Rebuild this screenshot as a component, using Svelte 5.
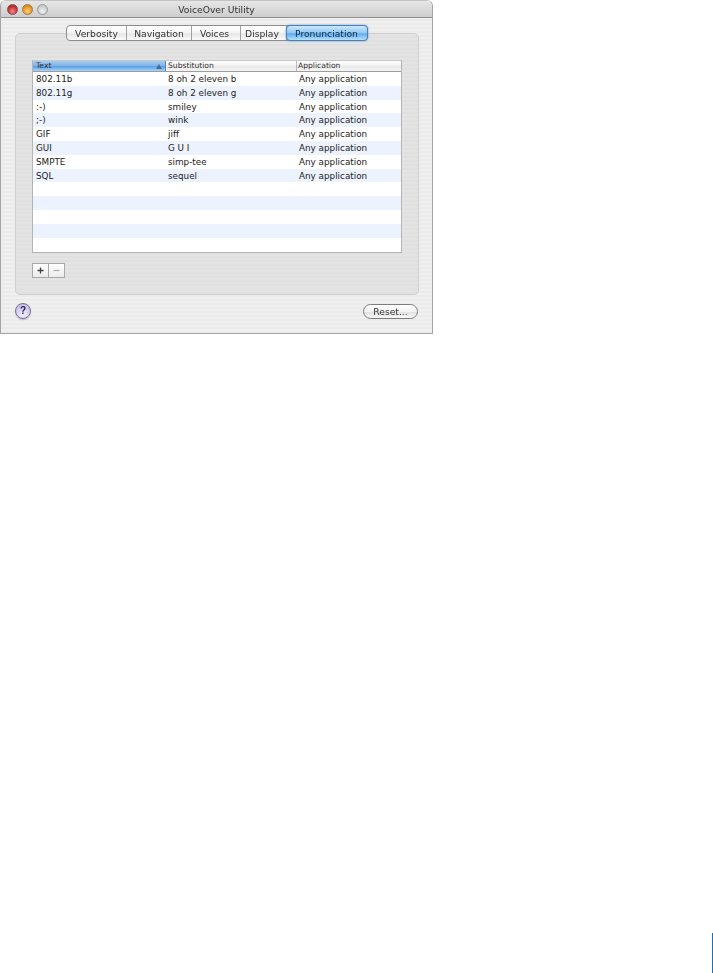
<script>
  const rows = [
    ['802.11b', '8 oh 2 eleven b', 'Any application'],
    ['802.11g', '8 oh 2 eleven g', 'Any application'],
    [':-)', 'smiley', 'Any application'],
    [';-)', 'wink', 'Any application'],
    ['GIF', 'jiff', 'Any application'],
    ['GUI', 'G U I', 'Any application'],
    ['SMPTE', 'simp-tee', 'Any application'],
    ['SQL', 'sequel', 'Any application'],
    ['', '', ''], ['', '', ''], ['', '', ''], ['', '', ''], ['', '', '']
  ];
  const tabs = ['Verbosity', 'Navigation', 'Voices', 'Display', 'Pronunciation'];
</script>

<div class="page">
  <div class="window">
    <div class="titlebar">
      <div class="lights">
        <span class="light red"></span>
        <span class="light amber"></span>
        <span class="light grey"></span>
      </div>
      <div class="title">VoiceOver Utility</div>
    </div>
    <div class="content">
      <div class="tabs">
        {#each tabs as t, i}
          <div class="tab t{i}" class:active={i === 4}>{t}</div>
        {/each}
      </div>
      <div class="panel">
        <div class="table">
          <div class="thead">
            <div class="th c1 sorted"><span>Text</span><i class="arrow"></i></div>
            <div class="th c2">Substitution</div>
            <div class="th c3">Application</div>
          </div>
          {#each rows as r, i}
            <div class="row" class:alt={i % 2 === 1}>
              <div class="td c1">{r[0]}</div>
              <div class="td c2">{r[1]}</div>
              <div class="td c3">{r[2]}</div>
            </div>
          {/each}
        </div>
        <div class="addrem">
          <div class="ar">
            <svg width="9" height="9" viewBox="0 0 9 9"><path d="M4.5 1.5v6M1.5 4.5h6" stroke="#444" stroke-width="1.3"/></svg>
          </div>
          <div class="ar">
            <svg width="9" height="9" viewBox="0 0 9 9"><path d="M1.5 4.5h6" stroke="#aaa" stroke-width="1.2"/></svg>
          </div>
        </div>
      </div>
      <div class="footer">
        <div class="help">?</div>
        <div class="reset">Reset...</div>
      </div>
    </div>
  </div>
  <div class="pagebar"></div>
</div>

<style>
  :global(body) { margin: 0; background: #fff; }
  .page {
    position: relative;
    width: 713px;
    height: 973px;
    overflow: hidden;
    background: #fff;
    font-family: "Lucida Grande", "DejaVu Sans", sans-serif;
    color: #222;
  }
  .window {
    width: 433px;
    height: 334px;
    box-sizing: border-box;
    border: 1px solid #a4a4a4;
    border-top-color: #c4c4c4;
    border-radius: 6px 6px 0 0;
    display: flex;
    flex-direction: column;
    background: repeating-linear-gradient(#f0f0f0 0 2px, #ebebeb 2px 4px);
    filter: blur(0.3px);
  }
  .titlebar {
    height: 16px;
    flex: none;
    display: flex;
    align-items: center;
    position: relative;
    background: linear-gradient(#e6e6e6, #cdcdcd);
    border-bottom: 1px solid #8f8f8f;
    border-radius: 5px 5px 0 0;
  }
  .lights { display: flex; gap: 4px; margin-left: 5.5px; }
  .light { width: 11px; height: 11px; border-radius: 50%; box-sizing: border-box; }
  .red { background: radial-gradient(circle at 50% 70%, #f58a8a, #b9232a 70%); border: 1px solid #8c4a4a; }
  .amber { background: radial-gradient(circle at 50% 70%, #fbd27a, #df8a18 70%); border: 1px solid #a07a3c; }
  .grey { background: radial-gradient(circle at 50% 70%, #f2f2f2, #c8c8c8 70%); border: 1px solid #9a9a9a; }
  .title {
    position: absolute;
    left: 0; right: 0; top: 0;
    line-height: 17px;
    text-align: center;
    font-size: 9.2px;
    color: #333;
  }
  .content {
    flex: 1;
    display: flex;
    flex-direction: column;
    padding: 7px 14px 0;
    min-height: 0;
  }
  .tabs {
    display: flex;
    margin-left: 51px;
    height: 16px;
    margin-bottom: -8px;
    position: relative;
    z-index: 1;
    width: 302px;
    box-sizing: border-box;
    border: 1px solid #8d8d8d;
    border-radius: 4px;
    background: linear-gradient(#fff, #f4f4f4 50%, #e6e6e6 55%, #fafafa);
    font-size: 9.2px;
    line-height: 15px;
    color: #333;
  }
  .tab { text-align: center; border-right: 1px solid #a0a0a0; box-sizing: border-box; }
  .t0 { width: 60px; }
  .t1 { width: 65px; }
  .t2 { width: 49px; padding-right: 3px; }
  .t3 { width: 46px; padding-right: 3px; }
  .t4 { flex: 1; border-right: 0; }
  .active {
    margin: -1px -1px -1px -1px;
    height: 16px;
    padding-right: 1px;
    border-radius: 4px;
    background: linear-gradient(#cfe8fb, #8fc8f4 50%, #5fabec 55%, #b4e2fc);
    border: 1px solid #4b7fb8;
    color: #13294a;
    line-height: 15px;
    box-shadow: 0 0 2px #4a90e0;
  }
  .panel {
    width: 404px;
    height: 262px;
    box-sizing: border-box;
    border: 1px solid #cfcfcf;
    border-radius: 5px;
    background: repeating-linear-gradient(#e4e4e4 0 2px, #e0e0e0 2px 4px);
    padding: 26px 16px 0;
    flex: none;
  }
  .table {
    width: 370px;
    height: 193px;
    box-sizing: border-box;
    border: 1px solid #b4b4b4;
    border-top: 0;
    background: #fff;
    overflow: hidden;
    font-size: 8.8px;
  }
  .thead {
    display: flex;
    height: 12px;
    box-sizing: border-box;
    border-bottom: 1px solid #9c9c9c;
    background: linear-gradient(#fff, #f0f0f0 50%, #e8e8e8 55%, #f6f6f6);
    border-top: 1px solid #c8c8c8;
    font-size: 7.6px;
    line-height: 10px;
    color: #333;
  }
  .c1 { width: 133px; flex: none; padding-left: 3px; box-sizing: border-box; }
  .c2 { width: 131px; flex: none; padding-left: 2px; box-sizing: border-box; }
  .c3 { flex: 1; padding-left: 2px; box-sizing: border-box; }
  .th { border-right: 1px solid #b8b8b8; }
  .th.c3 { border-right: 0; padding-left: 1px; }
  .sorted {
    display: flex;
    justify-content: space-between;
    align-items: center;
    padding-right: 3px;
    background: linear-gradient(#a6cdf2, #7db3ea 50%, #5f9fe2 55%, #a5d4f8);
    border-right: 1px solid #5a86b8;
  }
  .arrow {
    width: 0; height: 0;
    border-left: 3px solid transparent;
    border-right: 3px solid transparent;
    border-bottom: 5px solid #4a6a90;
  }
  .row {
    display: flex;
    height: 13.8px;
    line-height: 15.6px;
    color: #222;
  }
  .alt { background: #edf3fe; }
  .td { white-space: nowrap; }
  .addrem { display: flex; margin-top: 10px; width: 33px; }
  .ar {
    width: 17px;
    height: 15px;
    box-sizing: border-box;
    border: 1px solid #a8a8a8;
    background: linear-gradient(#fff, #ececec);
    display: flex;
    align-items: center;
    justify-content: center;
  }
  .ar + .ar { border-left: 0; width: 16px; }
  .footer {
    flex: 1;
    display: flex;
    justify-content: space-between;
    align-items: center;
    padding-bottom: 6px;
  }
  .help {
    width: 16px;
    height: 16px;
    box-sizing: border-box;
    border: 1px solid #77708f;
    border-radius: 50%;
    background: radial-gradient(circle at 50% 75%, #f4effd, #c9bdf0 75%);
    text-align: center;
    font: bold 10px/14px "Liberation Sans", sans-serif;
    color: #2a2a3a;
    box-shadow: 0 1px 1px #bbb;
  }
  .reset {
    width: 55px;
    height: 15px;
    box-sizing: border-box;
    border: 1px solid #7c7c7c;
    border-radius: 7.5px;
    background: linear-gradient(#fff, #f2f2f2 50%, #e2e2e2 55%, #f8f8f8);
    text-align: center;
    font-size: 9.2px;
    line-height: 13px;
    color: #333;
  }
  .pagebar {
    position: absolute;
    left: 712px;
    top: 933px;
    width: 1px;
    height: 40px;
    background: #1f6fb2;
  }
</style>
